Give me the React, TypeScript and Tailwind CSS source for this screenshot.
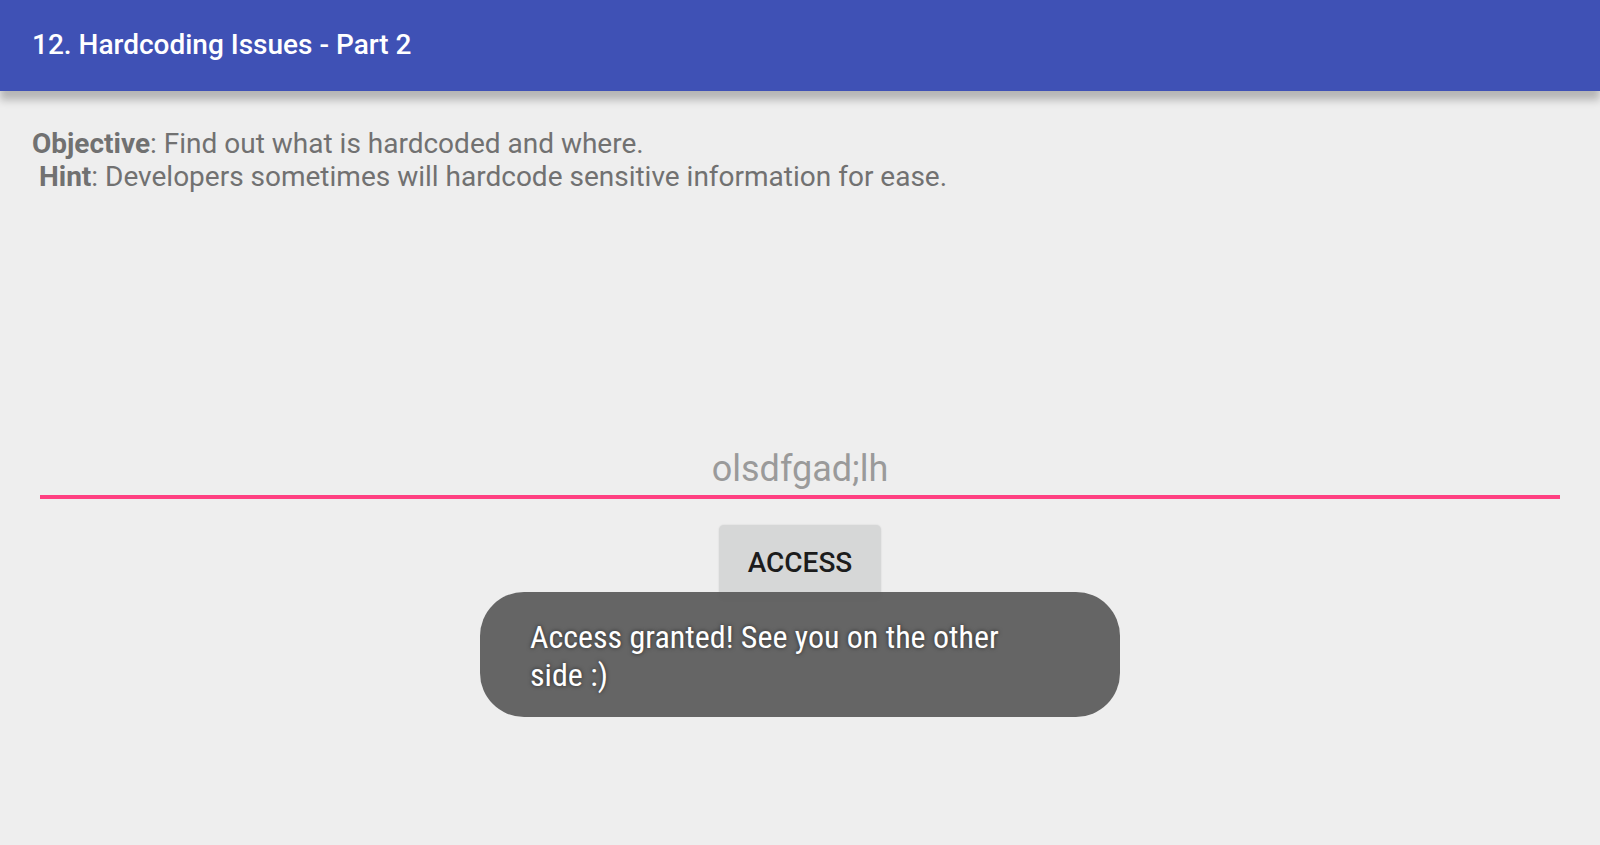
export default function App() {
  return (
    <div className="flex min-h-screen flex-col bg-[#eeeeee] font-['Roboto',sans-serif]">
      <header className="flex h-[91px] items-center bg-[#3f51b5] px-8 pb-[2px] shadow-[0_9px_8px_rgba(0,0,0,0.24)]">
        <h1 className="text-[28px] font-medium text-white">12. Hardcoding Issues - Part 2</h1>
      </header>
      <main className="flex grow flex-col px-8 pt-9">
        <p className="h-[300px] whitespace-pre-wrap text-[28px] leading-[33px] text-[#717171]">
          <b>Objective</b>: Find out what is hardcoded and where.{"\n"} <b>Hint</b>: Developers sometimes will hardcode sensitive information for ease.
        </p>
        <form className="flex flex-col items-center px-2" onSubmit={(e) => e.preventDefault()}>
          <input
            type="text"
            aria-label="Vendor key"
            placeholder="olsdfgad;lh"
            className="h-[72px] w-full border-b-4 border-[#ff4081] bg-transparent pt-4 text-center text-[36px] text-black outline-none placeholder:text-[#9a9a9a]"
          />
          <button
            type="submit"
            className="mt-[26px] h-[75px] rounded-[5px] bg-[#d6d7d7] px-[29px] pt-px text-[28px] font-medium text-[#1c1c1c] shadow-[0_0_2px_rgba(0,0,0,0.12)]"
          >
            ACCESS
          </button>
        </form>
      </main>
      <div
        role="status"
        className="absolute inset-x-0 top-[592px] mx-auto w-[640px] rounded-[44px] bg-[#5d5d5d]/95 pt-[26px] pr-[80px] pb-[23px] pl-[50px] font-['Roboto_Condensed','Roboto',sans-serif] text-[32px] leading-[38px] text-white [text-shadow:0_0_4px_rgba(0,0,0,0.6)]"
      >
        Access granted! See you on the other side :)
      </div>
    </div>
  );
}
